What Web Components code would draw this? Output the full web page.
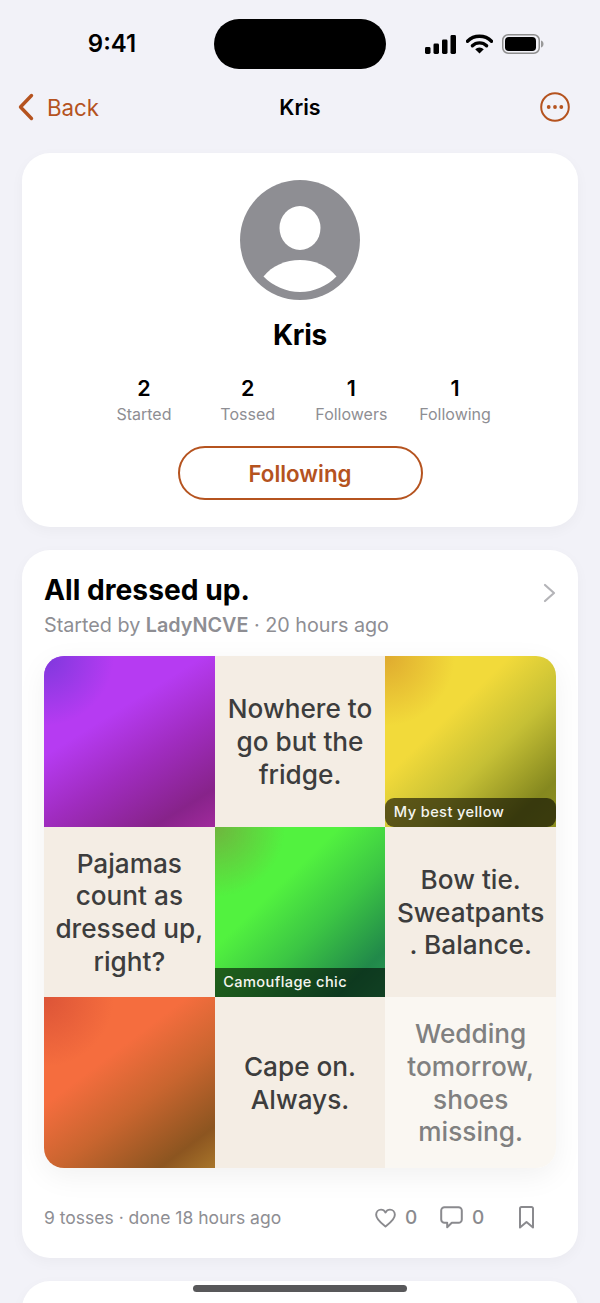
<!DOCTYPE html>
<html><head><meta charset="utf-8">
<style>
html,body{margin:0;padding:0;background:#f2f2f8;height:1303px;overflow:hidden;font-family:Inter,"Liberation Sans",sans-serif;}
app-screen{display:block}
</style></head><body>
<app-screen>
  <status-bar></status-bar>
  <nav-bar title="Kris" back="Back"></nav-bar>
  <profile-card name="Kris">
    <stat-item value="2" label="Started"></stat-item>
    <stat-item value="2" label="Tossed"></stat-item>
    <stat-item value="1" label="Followers"></stat-item>
    <stat-item value="1" label="Following"></stat-item>
  </profile-card>
  <toss-card title="All dressed up." by="LadyNCVE" ago="20 hours ago" done="9 tosses · done 18 hours ago">
    <toss-cell kind="purple"></toss-cell>
    <toss-cell>Nowhere to go but the fridge.</toss-cell>
    <toss-cell kind="yellow" caption="My best yellow" round></toss-cell>
    <toss-cell>Pajamas count as dressed up, right?</toss-cell>
    <toss-cell kind="green" caption="Camouflage chic"></toss-cell>
    <toss-cell>Bow tie. Sweatpants. Balance.</toss-cell>
    <toss-cell kind="orange"></toss-cell>
    <toss-cell>Cape on. Always.</toss-cell>
    <toss-cell faded>Wedding tomorrow, shoes missing.</toss-cell>
  </toss-card>
  <next-card></next-card>
  <home-indicator></home-indicator>
</app-screen>
<script>
function def(name, html){
  customElements.define(name, class extends HTMLElement{
    connectedCallback(){
      if(this.shadowRoot) return;
      const a=n=>this.getAttribute(n)||'';
      const s=this.attachShadow({mode:'open'});
      s.innerHTML=typeof html==='function'?html(a,this):html;
    }
  });
}
const ACCENT='#b5531f';
const CARDSHADOW='0 4px 14px rgba(0,0,0,.035)';
def('status-bar',`<style>
:host{display:block;height:84px}
.row{display:flex;align-items:center;height:50px;padding-top:19px}
.time{width:214px;padding-left:10px;text-align:center;box-sizing:border-box;font:600 24px/50px Inter,sans-serif;color:#000}
.island{width:172px;height:50px;border-radius:25px;background:#000;flex:none}
.icons{margin-left:39px;display:flex;align-items:center;gap:10px}
svg{display:block}
</style>
<div class="row"><div class="time">9:41</div><div class="island"></div>
<div class="icons">
<svg width="31" height="19" viewBox="0 0 31 19"><rect x="0" y="12" width="5.500" height="7" rx="1.400"/><rect x="8.500" y="8.500" width="5.500" height="10.500" rx="1.400"/><rect x="17" y="4.500" width="5.500" height="14.500" rx="1.400"/><rect x="25.500" y="0" width="5.500" height="19" rx="1.400"/></svg>
<svg width="27" height="20" viewBox="0 0 27 20"><path d="M1.500 7.200A17 17 0 0 1 25.500 7.200" fill="none" stroke="#000" stroke-width="3.400" stroke-linecap="round"/><path d="M6.400 11.800A10 10 0 0 1 20.600 11.800" fill="none" stroke="#000" stroke-width="3.400" stroke-linecap="round"/><path d="M13.500 19.600L9.200 15.200A6 6 0 0 1 17.800 15.200Z"/></svg>
<svg width="42" height="20" viewBox="0 0 42 20" style="margin-left:-1px"><rect x=".75" y=".75" width="36.500" height="18.500" rx="5.500" fill="none" stroke="#8e8e8e" stroke-width="1.500"/><rect x="3" y="3" width="31" height="14" rx="3.800"/><path d="M39 6.500c1.600.4 2.500 1.800 2.500 3.500s-.9 3.100-2.500 3.500z" fill="#999"/></svg>
</div></div>`);

def('nav-bar',(a)=>`<style>
:host{display:block;height:46px}
.bar{display:grid;grid-template-columns:1fr auto 1fr;align-items:center;height:46px;padding:0 30px 0 18px}
.back{display:flex;align-items:center;gap:13px;color:${ACCENT};font:400 22.300px Inter,sans-serif}
.t{font:600 21.500px Inter,sans-serif;color:#000;margin-left:12px}
.more{justify-self:end;display:block}
svg{display:block}
</style>
<div class="bar"><div class="back"><svg width="16" height="28" viewBox="0 0 16 28"><path d="M13.500 2.500L2.500 14L13.500 25.500" fill="none" stroke="${ACCENT}" stroke-width="3.400" stroke-linecap="round" stroke-linejoin="round"/></svg><span>${a('back')}</span></div>
<div class="t">${a('title')}</div>
<svg class="more" width="30" height="30" viewBox="0 0 30 30"><circle cx="15" cy="15" r="13.800" fill="none" stroke="${ACCENT}" stroke-width="2"/><circle cx="8.700" cy="15" r="1.900" fill="${ACCENT}"/><circle cx="15" cy="15" r="1.900" fill="${ACCENT}"/><circle cx="21.300" cy="15" r="1.900" fill="${ACCENT}"/></svg></div>`);

def('profile-card',(a)=>`<style>
:host{display:block;margin:23px 22px 0;background:#fff;border-radius:28px;height:374px;box-sizing:border-box;padding-top:27px;box-shadow:${CARDSHADOW}}
.av{display:block;margin:0 auto}
.name{text-align:center;font:700 28px/34px Inter,sans-serif;color:#000;margin-top:18px;letter-spacing:-.2px}
.stats{display:grid;grid-template-columns:repeat(4,103.700px);justify-content:center;margin-top:23px;margin-left:-1px}
button{display:block;margin:22px auto 0;width:245px;height:54px;box-sizing:border-box;border:2px solid ${ACCENT};border-radius:27px;background:#fff;color:${ACCENT};font:600 22.300px Inter,sans-serif;padding:0}
</style>
<svg class="av" width="120" height="120" viewBox="0 0 120 120"><circle cx="60" cy="60" r="60" fill="#8e8e93"/><ellipse cx="60" cy="48" rx="20.500" ry="22" fill="#fff"/><path d="M23.500 96.500C32 85.500 46 80 60 80s28 5.500 36.500 16.500C87 106 74 112 60 112S33 106 23.500 96.500Z" fill="#fff"/></svg>
<div class="name">${a('name')}</div>
<div class="stats"><slot></slot></div>
<button>Following</button>`);

def('stat-item',(a)=>`<style>
:host{display:block;text-align:center}
.v{font:600 21.500px/26px Inter,sans-serif;color:#000}
.l{font:400 16px/20px Inter,sans-serif;color:#8e8e93;margin-top:3px;white-space:nowrap}
</style><div class="v">${a('value')}</div><div class="l">${a('label')}</div>`);

def('toss-card',(a)=>`<style>
:host{display:block;margin:23px 22px 0;background:#fff;border-radius:28px;height:708px;box-sizing:border-box;padding:22px 22px 0;font-family:Inter,sans-serif;box-shadow:${CARDSHADOW}}
.head{display:flex;justify-content:space-between;align-items:center;height:36px}
h2{margin:0;font:700 28.200px/36px Inter,sans-serif;color:#000}
.chev{margin-top:5px;display:block}
.sub{font:400 19.750px/24px Inter,sans-serif;color:#8e8e93;margin-top:5px}
.sub b{font-weight:600}
.grid{display:grid;grid-template-columns:repeat(3,1fr);grid-auto-rows:170.670px;width:512px;margin-top:19px;border-radius:20px;overflow:hidden}
.wrap{border-radius:20px;box-shadow:0 8px 30px rgba(0,0,0,.06)}
.foot{display:flex;align-items:center;height:24px;margin-top:38px;color:#8e8e93;font:400 17.500px/24px Inter,sans-serif}
.foot .t{flex:1}
.act{display:flex;align-items:center;font:500 19px/24px Inter,sans-serif;color:#8a8a8e}
svg{display:block}
</style>
<div class="head"><h2>${a('title')}</h2><svg class="chev" width="13" height="20" viewBox="0 0 13 20"><path d="M2 2L11 10L2 18" fill="none" stroke="#b4b4b8" stroke-width="2.200" stroke-linecap="round" stroke-linejoin="round"/></svg></div>
<div class="sub">Started by <b>${a('by')}</b> · ${a('ago')}</div>
<div class="wrap"><div class="grid"><slot></slot></div></div>
<div class="foot"><div class="t">${a('done')}</div>
<div class="act">
<svg width="21" height="20" viewBox="0 0 22 20"><path d="M11 18.800C8 16.500 1.200 12 1.200 6.700C1.200 3.500 3.500 1.200 6.300 1.200C8.300 1.200 10 2.300 11 4.200C12 2.300 13.700 1.200 15.700 1.200C18.500 1.200 20.800 3.500 20.800 6.700C20.800 12 14 16.500 11 18.800Z" fill="none" stroke="#8a8a8e" stroke-width="2" stroke-linejoin="round"/></svg>
<span style="margin-left:9px;width:11px">0</span>
<svg style="margin-left:24px" width="23" height="23" viewBox="0 0 23 23"><path d="M4.500 1.200H18.500A3.300 3.300 0 0 1 21.800 4.500V13.500A3.300 3.300 0 0 1 18.500 16.800H11.800L7.200 21.300V16.800H4.500A3.300 3.300 0 0 1 1.200 13.500V4.500A3.300 3.300 0 0 1 4.500 1.200Z" fill="none" stroke="#8a8a8e" stroke-width="2" stroke-linejoin="round"/></svg>
<span style="margin-left:9px;width:11px">0</span>
<svg style="margin-left:36px;margin-right:22px" width="15" height="23" viewBox="0 0 15 23"><path d="M2.500 1H12.500A1.500 1.500 0 0 1 14 2.500V21.500L7.500 16L1 21.500V2.500A1.500 1.500 0 0 1 2.500 1Z" fill="none" stroke="#8a8a8e" stroke-width="2" stroke-linejoin="round"/></svg>
</div></div>`);

const mk=(corner,angle,bright,mid,dark,end)=>`radial-gradient(circle at 0 0,${corner} 0,${corner}00 70px),linear-gradient(${angle}deg,${bright} 0%,${bright} 36%,${mid} 60%,${dark} 86%,${end} 100%)`;
const G={
 purple:mk('#7d38dc',148,'#b63bf2','#a02cc0','#87238a','#a02a9c'),
 yellow:mk('#dfaa2f',136,'#f2da3a','#c6c035','#85881f','#8e9020'),
 green:mk('#6fb53e',136,'#52f23f','#3cc644','#21894a','#2a9a55'),
 orange:mk('#dc5437',143,'#f56d3e','#c9652f','#8c5520','#a8752a')
};
def('toss-cell',(a,el)=>{
 const k=a('kind');
 const faded=el.hasAttribute('faded');
 return `<style>
:host{display:block;position:relative;overflow:hidden;min-width:0;background:${k?G[k]:(faded?'#faf7f2':'#f4ede4')}}
.txt{box-sizing:border-box;height:100%;display:flex;align-items:center;justify-content:center;text-align:center;padding:2px 8px 0;font:550 26.200px/32.700px Inter,sans-serif;color:${faded?'#808080':'#3d3d3d'};overflow-wrap:anywhere}
.cap{position:absolute;left:0;right:0;bottom:0;height:29px;box-sizing:border-box;padding-left:8.500px;background:rgba(0,0,0,.58);color:#f5f5f0;font:500 14.600px/29px Inter,sans-serif;letter-spacing:.4px;border-radius:${el.hasAttribute('round')?'9px':'0'}}
</style>${k?'':'<div class="txt"><slot></slot></div>'}${a('caption')?`<div class="cap">${a('caption')}</div>`:''}`;
});
def('next-card',`<style>:host{display:block;margin:23px 22px 0;background:#fff;border-radius:28px 28px 0 0;height:60px;box-shadow:${CARDSHADOW}}</style>`);
def('home-indicator',`<style>:host{position:absolute;left:193px;top:1285px;width:214px;height:7px;border-radius:4px;background:#58585a;display:block}</style>`);
def('app-screen',`<style>:host{display:block;height:1303px;overflow:hidden;position:relative}</style><slot></slot>`);
</script>
</body></html>
